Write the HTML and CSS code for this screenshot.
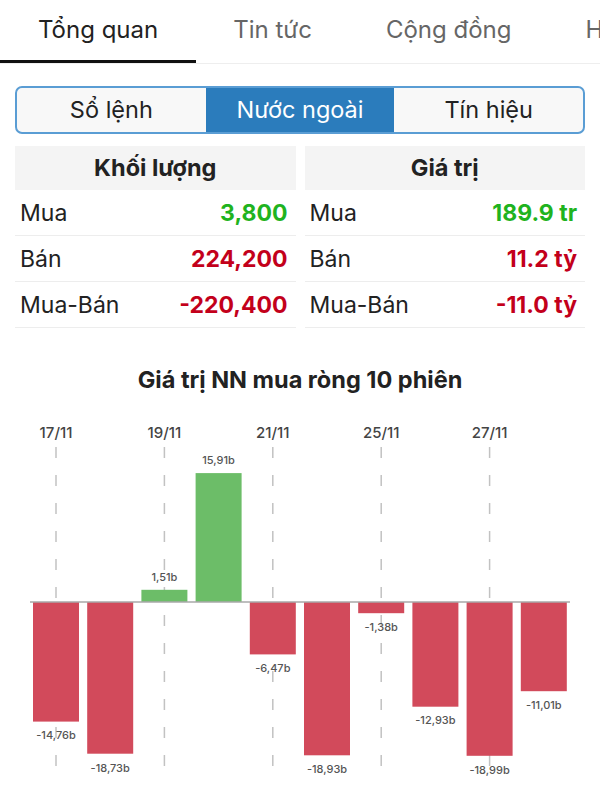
FILE: index.html
```html
<!DOCTYPE html>
<html lang="vi">
<head>
  <meta charset="UTF-8">
  <meta name="viewport" content="width=device-width, initial-scale=1">
  <title>Nước ngoài</title>
  <link rel="stylesheet" href="styles.css">
</head>
<body>
  <div class="tabs">
    <div class="tab active">Tổng quan</div>
    <div class="tab">Tin tức</div>
    <div class="tab">Cộng đồng</div>
    <div class="tab">Hồ sơ</div>
  </div>

  <div class="segments">
    <div class="segment">Sổ lệnh</div>
    <div class="segment active">Nước ngoài</div>
    <div class="segment">Tín hiệu</div>
  </div>

  <div class="stats">
    <div class="stat-col">
      <div class="stat-head">Khối lượng</div>
      <div class="stat-row"><span>Mua</span><b class="up">3,800</b></div>
      <div class="stat-row"><span>Bán</span><b class="down">224,200</b></div>
      <div class="stat-row"><span>Mua-Bán</span><b class="down">-220,400</b></div>
    </div>
    <div class="stat-col">
      <div class="stat-head">Giá trị</div>
      <div class="stat-row"><span>Mua</span><b class="up">189.9 tr</b></div>
      <div class="stat-row"><span>Bán</span><b class="down">11.2 tỷ</b></div>
      <div class="stat-row"><span>Mua-Bán</span><b class="down">-11.0 tỷ</b></div>
    </div>
  </div>

  <h3 class="chart-title">Giá trị NN mua ròng 10 phiên</h3>

  <svg class="chart" width="600" height="406" viewBox="0 394 600 406">
    <!-- duong ke ngay -->
    <g class="grid">
      <line x1="56" y1="447" x2="56" y2="778"/>
      <line x1="164.4" y1="447" x2="164.4" y2="778"/>
      <line x1="272.8" y1="447" x2="272.8" y2="778"/>
      <line x1="381.2" y1="447" x2="381.2" y2="778"/>
      <line x1="489.6" y1="447" x2="489.6" y2="778"/>
    </g>
    <g class="dates">
      <text x="56" y="438">17/11</text>
      <text x="164.4" y="438">19/11</text>
      <text x="272.8" y="438">21/11</text>
      <text x="381.2" y="438">25/11</text>
      <text x="489.6" y="438">27/11</text>
    </g>

    <g class="bars">
      <rect class="neg" x="33" y="602" width="46" height="119.6"/>
      <rect class="neg" x="87.2" y="602" width="46" height="151.7"/>
      <rect class="pos" x="141.4" y="589.8" width="46" height="12.2"/>
      <rect class="pos" x="195.6" y="473.1" width="46" height="128.9"/>
      <rect class="neg" x="249.8" y="602" width="46" height="52.4"/>
      <rect class="neg" x="304" y="602" width="46" height="153.3"/>
      <rect class="neg" x="358.2" y="602" width="46" height="11.2"/>
      <rect class="neg" x="412.4" y="602" width="46" height="104.7"/>
      <rect class="neg" x="466.6" y="602" width="46" height="153.8"/>
      <rect class="neg" x="520.8" y="602" width="46" height="89.2"/>
    </g>

    <line class="axis" x1="30" y1="602" x2="570" y2="602"/>

    <g class="values">
      <text x="56" y="739">-14,76b</text>
      <text x="110.2" y="772">-18,73b</text>
      <text x="164.4" y="581">1,51b</text>
      <text x="218.6" y="464">15,91b</text>
      <text x="272.8" y="672">-6,47b</text>
      <text x="327" y="773">-18,93b</text>
      <text x="381.2" y="631">-1,38b</text>
      <text x="435.4" y="724">-12,93b</text>
      <text x="489.6" y="774">-18,99b</text>
      <text x="543.8" y="709">-11,01b</text>
    </g>
  </svg>
</body>
</html>
```

FILE: styles.css
```css
body {
  margin: 0;
  width: 600px;
  height: 800px;
  overflow: hidden;
  font-family: Inter, "Noto Sans", sans-serif;
  background: #fff;
  color: #222;
}

.tabs {
  display: flex;
  height: 63px;
  border-bottom: 1px solid #eeeeee;
  white-space: nowrap;
  overflow: hidden;
}

.tab {
  padding: 0 37px;
  height: 60px;
  line-height: 60px;
  font-size: 24px;
  color: #666;
  border-bottom: 3px solid transparent;
}

.tab:first-child {
  padding: 0 38px;
}

.tab.active {
  color: #222;
  border-bottom-color: #111;
}

.segments {
  display: flex;
  margin: 22px 15px 0;
  height: 44px;
  border: 2px solid #5a9dd4;
  border-radius: 7px;
  overflow: hidden;
  background: #f8f8f8;
}

.segment {
  flex: 1;
  text-align: center;
  line-height: 44px;
  font-size: 23.5px;
  color: #222;
}

.segment.active {
  background: #2b7cbc;
  color: #fff;
}

.stats {
  display: grid;
  grid-template-columns: 1fr 1fr;
  gap: 9px;
  margin: 12px 15px 0;
}

.stat-head {
  height: 44px;
  line-height: 44px;
  background: #f4f4f4;
  text-align: center;
  font-size: 23.5px;
  font-weight: 700;
  color: #222;
}

.stat-row {
  display: flex;
  justify-content: space-between;
  align-items: center;
  height: 45px;
  border-bottom: 1px solid #ededed;
  padding: 0 8px 0 5px;
  font-size: 23px;
}

.stat-row b {
  font-weight: 700;
}

.up {
  color: #1fb320;
}

.down {
  color: #c3001b;
}

.chart-title {
  margin: 38px 0 0;
  height: 28px;
  line-height: 28px;
  text-align: center;
  font-size: 23.5px;
  font-weight: 700;
  color: #222;
}

.chart {
  display: block;
}

.grid line {
  stroke: #c2c2c2;
  stroke-width: 1.5;
  stroke-dasharray: 11 17;
}

.dates text {
  font-size: 15px;
  font-weight: 500;
  fill: #444;
  text-anchor: middle;
}

.bars .pos {
  fill: #6cbd68;
}

.bars .neg {
  fill: #d24a5b;
}

.axis {
  stroke: #a9a9a9;
  stroke-width: 1.5;
}

.values text {
  font-size: 11px;
  font-weight: 500;
  fill: #555;
  text-anchor: middle;
}
```
